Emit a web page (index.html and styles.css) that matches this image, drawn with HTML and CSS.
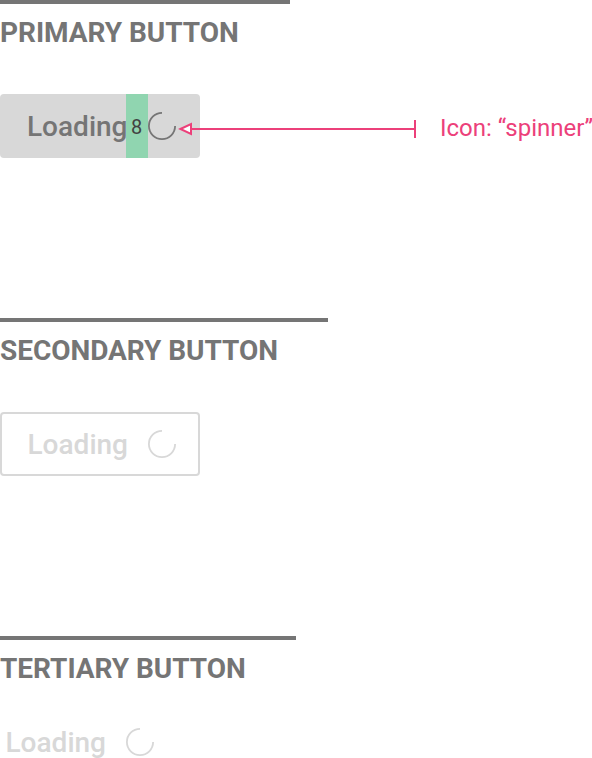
FILE: index.html
```html
<!DOCTYPE html>
<html lang="en">
<head>
<meta charset="utf-8">
<title>Loading buttons</title>
<link rel="stylesheet" href="styles.css">
</head>
<body>
<main class="specs">
  <section class="spec">
    <div class="rule rule-primary"></div>
    <h2 class="title">PRIMARY BUTTON</h2>
    <div class="demo">
      <button class="btn primary"><span class="label">Loading</span><span class="gap">8</span><svg class="spinner" viewBox="0 0 28 28"><path d="M14 .9A13.1 13.1 0 1 0 27.1 14"/></svg></button>
      <svg class="arrow" viewBox="0 0 240 20"><path d="M15 10H239M239 1V19"/><path class="arrowhead" d="M4.4 10L15 5V15Z"/></svg>
      <span class="note">Icon: “spinner”</span>
    </div>
  </section>
  <section class="spec">
    <div class="rule rule-secondary"></div>
    <h2 class="title">SECONDARY BUTTON</h2>
    <div class="demo">
      <button class="btn secondary"><span class="label">Loading</span><svg class="spinner" viewBox="0 0 28 28"><path d="M14 .9A13.1 13.1 0 1 0 27.1 14"/></svg></button>
    </div>
  </section>
  <section class="spec spec-last">
    <div class="rule rule-tertiary"></div>
    <h2 class="title">TERTIARY BUTTON</h2>
    <div class="demo demo-compact">
      <button class="btn tertiary"><span class="label">Loading</span><svg class="spinner" viewBox="0 0 28 28"><path d="M14 .9A13.1 13.1 0 1 0 27.1 14"/></svg></button>
    </div>
  </section>
</main>
</body>
</html>
```
FILE: styles.css
```css
* { box-sizing: border-box; }
body { margin: 0; background: #fff; font-family: Roboto, sans-serif; overflow: hidden; }
.specs { height: 758px; overflow: hidden; }
.spec { height: 318px; }
.spec-last { height: 122px; }
.rule { height: 4px; background: #757575; }
.rule-primary { width: 290px; }
.rule-secondary { width: 328px; }
.rule-tertiary { width: 296px; }
.title { margin: 13px 0 45px; font-size: 28px; line-height: 32px; font-weight: 700; letter-spacing: -0.04px; color: #757575; white-space: nowrap; }
.spec-last .title { margin-bottom: 43px; }
.demo { display: flex; align-items: center; height: 64px; white-space: nowrap; }
.demo-compact { height: 28px; }
.btn { display: flex; align-items: center; flex: none; width: 200px; height: 64px; padding: 0 0 0 27px; border: 0; border-radius: 4px; background: none; font: 500 28px/32px Roboto, sans-serif; color: #d8d8d8; }
.label { width: 99px; padding-top: 2px; text-align: left; }
.spinner { width: 28px; height: 28px; margin-left: 22px; fill: none; stroke: currentColor; stroke-width: 1.8; }
.primary { background: #d8d8d8; color: #757575; }
.gap { display: flex; align-items: center; justify-content: center; width: 22px; height: 64px; padding: 2px 1px 0 0; background: #90d5b0; color: #424242; font-size: 20px; font-weight: 400; }
.primary .spinner { margin-left: 0; }
.secondary { border: 2px solid #d8d8d8; padding-left: 25.5px; }
.secondary .spinner { margin-left: 21.5px; }
.tertiary { height: 28px; padding-left: 5.5px; }
.tertiary .spinner { margin-left: 21.5px; }
.arrow { flex: none; width: 240px; height: 20px; margin: 6px 0 0 -24px; fill: none; stroke: #ec407a; stroke-width: 2; }
.arrowhead { fill: #fff; }
.note { margin: 4px 0 0 24px; font-size: 24px; color: #ec407a; }
```
